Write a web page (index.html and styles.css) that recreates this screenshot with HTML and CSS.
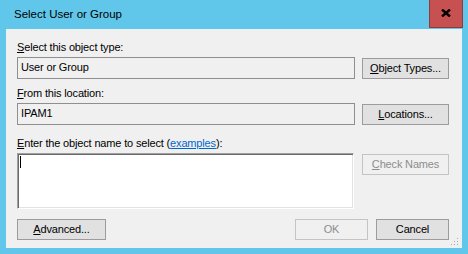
FILE: index.html
```html
<!DOCTYPE html>
<html>
<head>
<meta charset="utf-8">
<link rel="stylesheet" href="styles.css">
</head>
<body>
<div class="window">
  <div class="titlebar">
    <span class="title">Select User or Group</span>
    <div class="close">
      <svg width="10" height="8" viewBox="0 0 10 8"><path d="M1 0.5 L9 7.5 M9 0.5 L1 7.5" stroke="#000" stroke-width="2.4" fill="none"/></svg>
    </div>
  </div>
  <div class="client">
    <div class="label"><u>S</u>elect this object type:</div>
    <div class="row">
      <div class="field">User or Group</div>
      <div class="btn"><u>O</u>bject Types...</div>
    </div>
    <div class="label gap8"><u>F</u>rom this location:</div>
    <div class="row">
      <div class="field">IPAM1</div>
      <div class="btn"><u>L</u>ocations...</div>
    </div>
    <div class="label gap12"><u>E</u>nter the object name to select (<span class="link">examples</span>):</div>
    <div class="row">
      <div class="textarea"><span class="caret"></span></div>
      <div class="btn disabled"><u>C</u>heck Names</div>
    </div>
    <div class="footer">
      <div class="btn adv"><u>A</u>dvanced...</div>
      <div class="btn small disabled">OK</div>
      <div class="btn small">Cancel</div>
    </div>
    <svg class="grip" width="8" height="10" viewBox="0 0 8 10">
      <rect x="6" y="1" width="1" height="1" fill="#a8a8a8"/>
      <rect x="6" y="4" width="1" height="1" fill="#a8a8a8"/>
      <rect x="3" y="4" width="1" height="1" fill="#a8a8a8"/>
      <rect x="6" y="7" width="1" height="1" fill="#a8a8a8"/>
      <rect x="3" y="7" width="1" height="1" fill="#a8a8a8"/>
      <rect x="0" y="7" width="1" height="1" fill="#a8a8a8"/>
    </svg>
  </div>
</div>
</body>
</html>
```

FILE: styles.css
```css
html, body {
  margin: 0;
  padding: 0;
}
body {
  background: #61c7ea;
  font-family: "Liberation Sans", Arial, sans-serif;
  color: #000;
}
.window {
  width: 468px;
  height: 254px;
  display: flex;
  flex-direction: column;
}
.titlebar {
  height: 29px;
  display: flex;
  align-items: flex-start;
}
.title {
  font-size: 11.5px;
  line-height: 13px;
  margin-top: 8px;
  padding-left: 14px;
}
.close {
  margin-left: auto;
  margin-right: 5px;
  width: 34px;
  height: 28px;
  box-sizing: border-box;
  background: #c75050;
  border: 1px solid #8e3b3b;
  border-top: none;
  display: flex;
  align-items: center;
  justify-content: center;
  padding-bottom: 1px;
}
.client {
  flex: 1;
  margin: 0 6px 6px;
  background: #f0f0f0;
  padding: 12px 13px 8px 11px;
  display: flex;
  flex-direction: column;
  position: relative;
  font-size: 11px;
  letter-spacing: -0.16px;
}
.label {
  height: 13px;
  line-height: 13px;
  white-space: nowrap;
}
.gap8 { margin-top: 8px; }
.gap12 { margin-top: 12px; }
.row {
  margin-top: 3px;
  display: flex;
  justify-content: space-between;
  align-items: flex-start;
}
.field {
  width: 338px;
  height: 22px;
  box-sizing: border-box;
  border: 1px solid #8f8f8f;
  padding-left: 3px;
  line-height: 18px;
  background: #f0f0f0;
}
.btn {
  width: 87px;
  height: 21px;
  box-sizing: border-box;
  border: 1px solid #9c9c9c;
  background: #e1e1e1;
  display: flex;
  align-items: center;
  justify-content: center;
  margin-top: 1px;
  line-height: 13px;
  white-space: nowrap;
}
.btn.disabled {
  background: #f0f0f0;
  border-color: #c4c4c4;
  color: #8d8d8d;
}
.textarea {
  width: 337px;
  height: 56px;
  box-sizing: border-box;
  background: #fff;
  border: 1px solid;
  border-color: #a0a0a0 #fff #fff #a0a0a0;
  box-shadow: inset 1px 1px 0 #696969, inset -1px -1px 0 #e3e3e3;
  padding: 2px 0 0 2px;
}
.caret {
  display: block;
  width: 1px;
  height: 12px;
  background: #000;
}
.link {
  color: #0066cc;
  text-decoration: underline;
}
.footer {
  margin-top: 10px;
  display: flex;
  gap: 8px;
}
.footer .btn {
  margin-top: 0;
}
.btn.adv {
  width: 89px;
  margin-right: auto;
}
.btn.small {
  width: 73px;
}
.grip {
  position: absolute;
  right: 3px;
  bottom: 1px;
}
```
